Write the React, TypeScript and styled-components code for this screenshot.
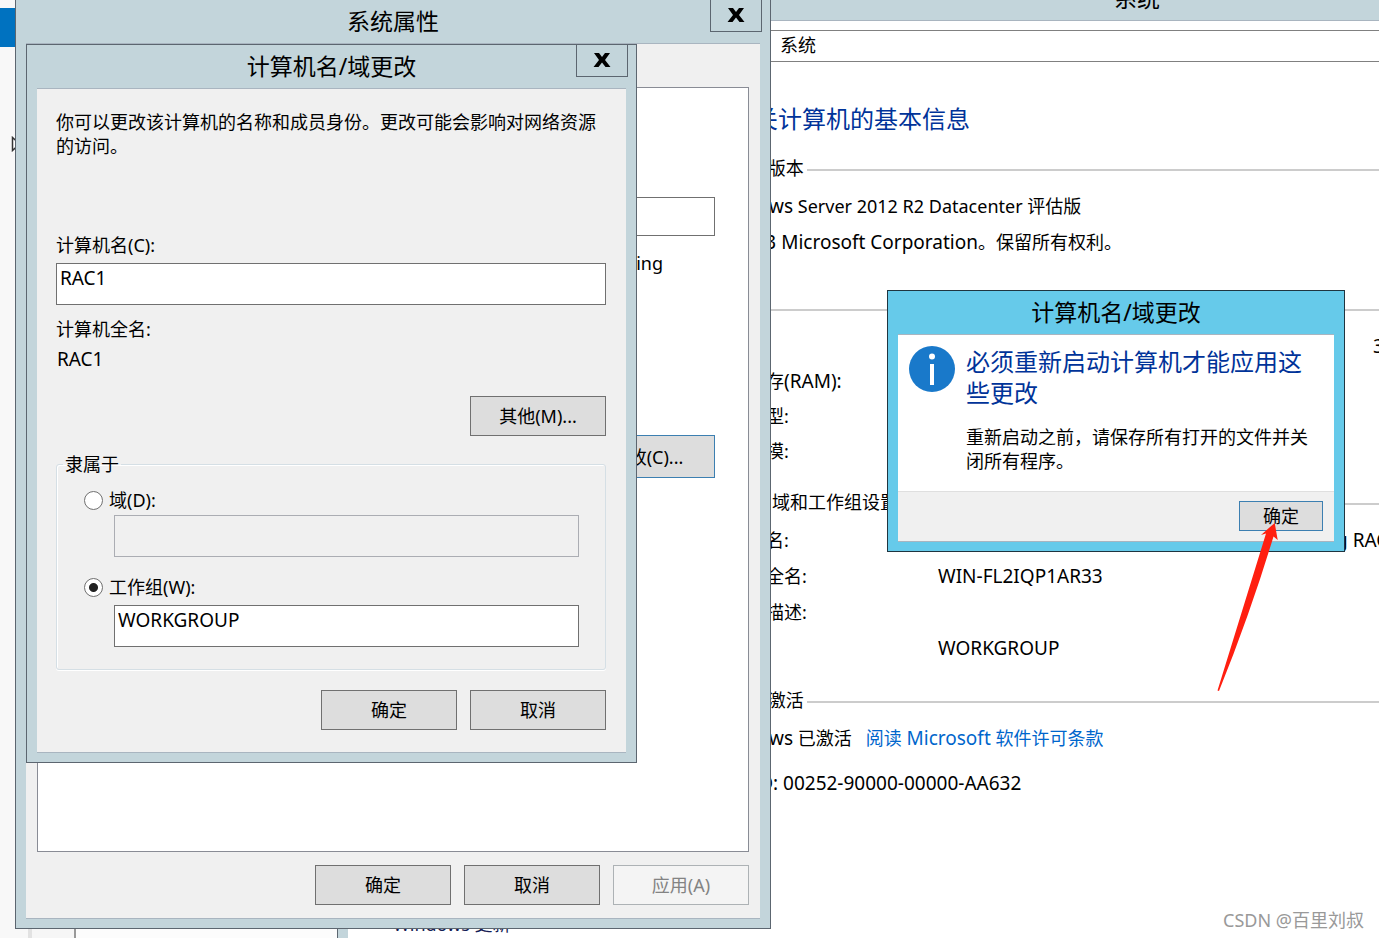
import React from "react";
import styled, { createGlobalStyle } from "styled-components";

const GlobalStyle = createGlobalStyle`
  *, *::before, *::after { box-sizing: border-box; }
  body {
    margin: 0;
    background: #fff;
    color: #000;
    font-family: "Noto Sans", "Noto Sans CJK SC", sans-serif;
    font-size: 18px;
    line-height: 24px;
  }
  p, h1, h2, fieldset { margin: 0; padding: 0; font-weight: 400; }
  button, input { font: inherit; color: inherit; border-radius: 0; margin: 0; }
`;

const Desktop = styled.main`
  position: relative;
  min-height: 100vh;
  overflow: hidden;
  background: #fff;
`;

/* Latin words run one size larger than the Chinese around them */
const Latin = styled.span`
  font-size: 19px;
`;

/* Window chrome */

const Frame = styled.section<{ $active?: boolean }>`
  position: absolute;
  display: flex;
  flex-direction: column;
  padding: 0 10px 9px;
  border: 1px solid ${(p) => (p.$active ? "#1f3540" : "#5c6670")};
  background: ${(p) => (p.$active ? "#66caea" : "#c3d5db")};
`;

const SystemFrame = styled(Frame)`
  top: -24px;
  left: 337px;
  right: -558px;
  bottom: -60px;
`;

const PropertiesFrame = styled(Frame)`
  top: -1px;
  left: 15px;
  width: 756px;
  min-height: 930px;
`;

const RenameFrame = styled(Frame)`
  top: 44px;
  left: 26px;
  width: 611px;
`;

const AlertFrame = styled(Frame)`
  top: 290px;
  left: 887px;
  width: 458px;
`;

const TitleBar = styled.header`
  display: flex;
  justify-content: center;
  align-items: center;
  height: 43px;
  padding-bottom: 2px;
`;

const Title = styled.h1`
  font-size: 23px;
  line-height: 32px;
`;

const CloseButton = styled.button`
  position: absolute;
  top: -1px;
  right: 8px;
  display: flex;
  align-items: center;
  justify-content: center;
  width: 52px;
  height: 33px;
  padding: 0 0 2px;
  border: 1px solid #5c6670;
  background: transparent;
`;

const Client = styled.div<{ $white?: boolean }>`
  flex: 1;
  display: flex;
  flex-direction: column;
  border-top: 1px solid #a9b5c0;
  border-bottom: 1px solid #a9b5c0;
  background: ${(p) => (p.$white ? "#fff" : "#f0f0f0")};
`;

/* Shared controls */

const Button = styled.button<{ $accent?: boolean; $small?: boolean }>`
  width: ${(p) => (p.$small ? 84 : 136)}px;
  height: ${(p) => (p.$small ? 30 : 40)}px;
  padding: 0;
  border: 1px solid ${(p) => (p.$accent ? "#3c7fb1" : "#707070")};
  background: #dddddd;
  &:disabled {
    border-color: #adb2b5;
    background: #f4f4f4;
    color: #838383;
  }
`;

const ButtonRow = styled.div<{ $top: number }>`
  display: flex;
  justify-content: flex-end;
  gap: 13px;
  margin-top: ${(p) => p.$top}px;
`;

const TextBox = styled.input`
  display: block;
  width: 100%;
  height: 42px;
  padding: 0 3px 12px;
  border: 1px solid #707070;
  background: #fff;
  font-size: 19px;
  &:disabled {
    border-color: #abadb3;
    background: #f0f0f0;
  }
`;

/* Server manager strip behind the dialogs */

const ManagerPane = styled.aside`
  position: absolute;
  top: 0;
  left: 0;
  bottom: 0;
  width: 337px;
  display: flex;
  background: #f8f8f8;
`;

const NavColumn = styled.div`
  width: 28px;
  padding-top: 8px;
`;

const NavSelected = styled.div`
  height: 39px;
  background: #0072c0;
`;

const Expander = styled.svg`
  display: block;
  margin: 89px 0 0 11px;
`;

const TreeColumn = styled.div`
  width: 48px;
  border-left: 4px solid #e2e2e2;
  border-right: 2px solid #999;
  background: #f6f6f6;
`;

const ListColumn = styled.div`
  flex: 1;
  background: #fcfcfc;
`;

/* System window */

const AddressBar = styled.nav`
  margin-top: 9px;
  padding: 0 0 2px 431px;
  border: 1px solid #808080;
  line-height: 28px;
`;

const SystemBody = styled.div`
  flex: 1;
  display: flex;
  flex-direction: column;
  padding: 41px 0 0 334px;
`;

const PageHeading = styled.h2`
  color: #003399;
  font-size: 24px;
  line-height: 32px;
`;

const Section = styled.section<{ $top: number }>`
  margin-top: ${(p) => p.$top}px;
`;

const SectionTitle = styled.h2`
  display: flex;
  align-items: center;
  gap: 3px;
  height: 24px;
  margin-bottom: 8px;
  font-size: 18px;
  white-space: nowrap;
  &::after {
    content: "";
    flex: 1;
    height: 2px;
    margin-top: 3px;
    background: #cccccc;
  }
`;

const Row = styled.div<{ $height?: number }>`
  display: flex;
  align-items: center;
  height: ${(p) => p.$height ?? 36}px;
  padding-left: 30px;
  white-space: nowrap;
`;

const Label = styled.span`
  width: 226px;
`;

const Value = styled(Latin)<{ $shift?: number }>`
  margin-left: ${(p) => p.$shift ?? 0}px;
`;

const Link = styled.a`
  margin-left: 14px;
  color: #0066cc;
  text-decoration: none;
`;

const SeeAlso = styled.a`
  position: absolute;
  left: 393px;
  bottom: 2px;
  color: #151c55;
  text-decoration: none;
`;

/* System properties window */

const TabPage = styled.div`
  display: flex;
  flex-direction: column;
  align-items: flex-end;
  height: 765px;
  margin: 43px 11px 0;
  padding: 109px 33px 0;
  border: 1px solid #898c95;
  background: #fff;
`;

const DescriptionBox = styled(TextBox)`
  width: 460px;
  height: 39px;
`;

const Hint = styled.p`
  margin: 15px 52px 0 0;
`;

const ChangeButton = styled(Button)`
  height: 43px;
  margin-top: 160px;
`;

const ApplyButton = styled(Button)`
  margin-right: 11px;
`;

/* Rename dialog */

const RenameBody = styled(Client)`
  padding: 21px 20px 22px 19px;
`;

const FieldLabel = styled.label<{ $top?: number }>`
  display: block;
  margin-top: ${(p) => p.$top ?? 0}px;
`;

const NameBox = styled(TextBox)`
  margin-top: 6px;
`;

const FullName = styled.output`
  margin-top: 6px;
  padding-left: 1px;
  font-size: 19px;
`;

const Group = styled.fieldset`
  min-width: 0;
  margin-top: 16px;
  padding: 12px 26px 22px;
  border: 1px solid #d5dfe5;
  border-radius: 3px;
  box-shadow: inset 1px 1px 0 #fff, 0 1px 0 #fff;
  legend {
    margin-left: -20px;
    padding: 0 2px;
  }
`;

const Choice = styled.label<{ $top?: number }>`
  display: flex;
  align-items: center;
  gap: 6px;
  margin-top: ${(p) => p.$top ?? 0}px;
  margin-left: 1px;
`;

const Radio = styled.input`
  appearance: none;
  width: 19px;
  height: 19px;
  border: 1px solid #707070;
  border-radius: 50%;
  background: #fff;
  &:checked {
    background: radial-gradient(circle, #222 4px, #fff 5px);
  }
`;

const ChoiceField = styled.div<{ $top: number }>`
  margin-top: ${(p) => p.$top}px;
  padding-left: 31px;
`;

/* Restart alert */

const AlertContent = styled.div`
  display: flex;
  gap: 11px;
  padding: 11px 20px 17px 11px;
`;

const AlertText = styled.div`
  flex: 1;
`;

const AlertHeading = styled.h2`
  margin-bottom: 17px;
  color: #003399;
  font-size: 24px;
  line-height: 31px;
`;

const AlertFooter = styled.footer`
  display: flex;
  justify-content: flex-end;
  margin-top: 1px;
  padding: 9px 11px 10px;
  border-top: 1px solid #dfdfdf;
  background: #f0f0f0;
`;

const Pointer = styled.svg`
  position: absolute;
  top: 520px;
  left: 1215px;
  pointer-events: none;
`;

const Watermark = styled.p`
  position: absolute;
  right: 15px;
  bottom: 6px;
  color: #999;
`;

function Close() {
  return (
    <CloseButton aria-label="关闭">
      <svg width="18" height="14" viewBox="0 0 18 14">
        <path d="M1 0H6L9 4L12 0H17L12 7L17.500 14H12.500L9 9.500L5.500 14H.5L6 7Z" fill="#000" />
      </svg>
    </CloseButton>
  );
}

function ServerManager() {
  return (
    <ManagerPane>
      <NavColumn>
        <NavSelected />
        <Expander width="10" height="16" viewBox="0 0 10 16">
          <path d="M1.500 1.500V14.500L8.500 8Z" fill="#fff" stroke="#333" strokeWidth="1.500" />
        </Expander>
      </NavColumn>
      <TreeColumn />
      <ListColumn />
    </ManagerPane>
  );
}

function SystemWindow() {
  return (
    <SystemFrame>
      <TitleBar>
        <Title>系统</Title>
      </TitleBar>
      <Client $white>
        <AddressBar>系统</AddressBar>
        <SystemBody>
          <PageHeading>查看有关计算机的基本信息</PageHeading>
          <Section $top={21}>
            <SectionTitle>
              <span><Latin>Windows</Latin> 版本</span>
            </SectionTitle>
            <Row>
              <span><Latin>Windows</Latin> Server 2012 R2 Datacenter 评估版</span>
            </Row>
            <Row>
              <span><Latin>© 2013 Microsoft Corporation</Latin>。保留所有权利。</span>
            </Row>
          </Section>
          <Section $top={36}>
            <SectionTitle>系统</SectionTitle>
            <Row $height={35}>
              <Label>处理器:</Label>
              <Value $shift={435}>3</Value>
            </Row>
            <Row $height={35}>
              <span>安装内存<Latin>(RAM):</Latin></span>
            </Row>
            <Row $height={35}>系统类型:</Row>
            <Row $height={35}>笔和触摸:</Row>
          </Section>
          <Section $top={22}>
            <SectionTitle>计算机名、域和工作组设置</SectionTitle>
            <Row>
              <Label>计算机名:</Label>
              <Value $shift={398}>g RAC1</Value>
            </Row>
            <Row>
              <Label>计算机全名:</Label>
              <Value>WIN-FL2IQP1AR33</Value>
            </Row>
            <Row>计算机描述:</Row>
            <Row>
              <Label>工作组:</Label>
              <Value>WORKGROUP</Value>
            </Row>
          </Section>
          <Section $top={22}>
            <SectionTitle>
              <span><Latin>Windows</Latin> 激活</span>
            </SectionTitle>
            <Row>
              <span><Latin>Windows</Latin> 已激活</span>
              <Link href="#license">阅读 <Latin>Microsoft</Latin> 软件许可条款</Link>
            </Row>
            <Row $height={54}>
              <span>产品 <Latin>ID: 00252-90000-00000-AA632</Latin></span>
            </Row>
          </Section>
        </SystemBody>
      </Client>
    </SystemFrame>
  );
}

function PropertiesWindow() {
  return (
    <PropertiesFrame>
      <TitleBar>
        <Title>系统属性</Title>
      </TitleBar>
      <Close />
      <Client>
        <TabPage>
          <DescriptionBox aria-label="计算机描述" />
          <Hint>Accounting</Hint>
          <ChangeButton $accent>更改(C)...</ChangeButton>
        </TabPage>
        <ButtonRow $top={13}>
          <Button>确定</Button>
          <Button>取消</Button>
          <ApplyButton disabled>应用(A)</ApplyButton>
        </ButtonRow>
      </Client>
    </PropertiesFrame>
  );
}

function RenameDialog() {
  return (
    <RenameFrame>
      <TitleBar>
        <Title>计算机名/域更改</Title>
      </TitleBar>
      <Close />
      <RenameBody>
        <p>你可以更改该计算机的名称和成员身份。更改可能会影响对网络资源的访问。</p>
        <FieldLabel htmlFor="computer-name" $top={75}>计算机名(C):</FieldLabel>
        <NameBox id="computer-name" defaultValue="RAC1" />
        <FieldLabel htmlFor="full-name" $top={12}>计算机全名:</FieldLabel>
        <FullName id="full-name">RAC1</FullName>
        <ButtonRow $top={25}>
          <Button>其他(M)...</Button>
        </ButtonRow>
        <Group>
          <legend>隶属于</legend>
          <Choice>
            <Radio type="radio" name="member" />
            域(D):
          </Choice>
          <ChoiceField $top={3}>
            <TextBox aria-label="域" disabled />
          </ChoiceField>
          <Choice $top={18}>
            <Radio type="radio" name="member" defaultChecked />
            工作组(W):
          </Choice>
          <ChoiceField $top={6}>
            <TextBox aria-label="工作组" defaultValue="WORKGROUP" />
          </ChoiceField>
        </Group>
        <ButtonRow $top={20}>
          <Button>确定</Button>
          <Button>取消</Button>
        </ButtonRow>
      </RenameBody>
    </RenameFrame>
  );
}

function RestartAlert() {
  return (
    <AlertFrame $active role="alertdialog">
      <TitleBar>
        <Title>计算机名/域更改</Title>
      </TitleBar>
      <Client $white>
        <AlertContent>
          <svg width="46" height="46" viewBox="0 0 46 46">
            <circle cx="23" cy="23" r="23" fill="#1979ca" />
            <circle cx="23" cy="10.500" r="3" fill="#fff" />
            <rect x="21" y="18" width="4" height="21" fill="#fff" />
          </svg>
          <AlertText>
            <AlertHeading>必须重新启动计算机才能应用这些更改</AlertHeading>
            <p>重新启动之前，请保存所有打开的文件并关闭所有程序。</p>
          </AlertText>
        </AlertContent>
        <AlertFooter>
          <Button $accent $small>确定</Button>
        </AlertFooter>
      </Client>
    </AlertFrame>
  );
}

export default function App() {
  return (
    <>
      <GlobalStyle />
      <Desktop>
        <ServerManager />
        <SystemWindow />
        <SeeAlso href="#update">Windows 更新</SeeAlso>
        <PropertiesWindow />
        <RenameDialog />
        <RestartAlert />
        <Pointer width="66" height="174" viewBox="0 0 66 174">
          <path
            d="M59.700 3L46 15L51 13.500L2.500 170.500L4 171Q35 94 58.500 16.500L62.700 20Z"
            fill="#ff1f10"
          />
        </Pointer>
        <Watermark>CSDN @百里刘叔</Watermark>
      </Desktop>
    </>
  );
}
